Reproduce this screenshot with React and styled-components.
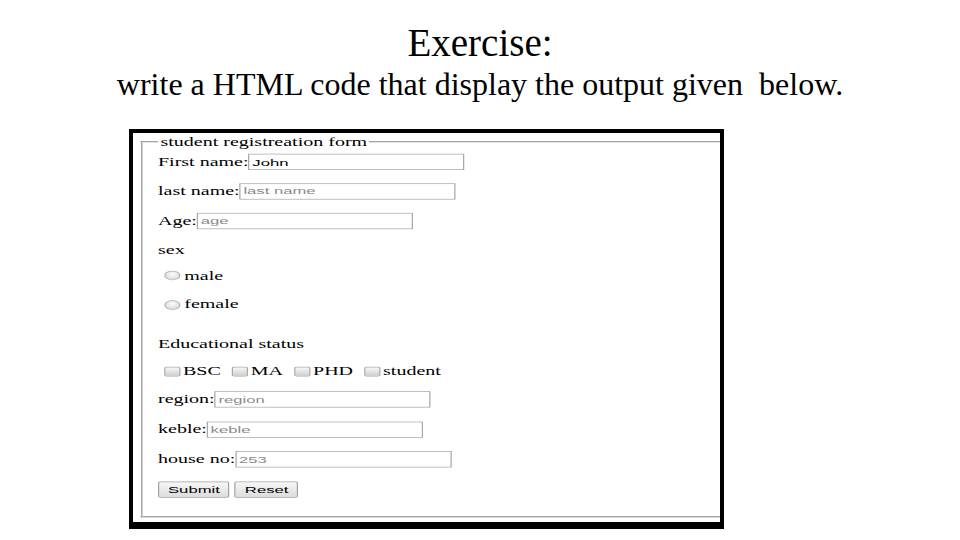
import React from 'react';
import styled, {createGlobalStyle} from 'styled-components';

const GlobalStyle = createGlobalStyle`
  html, body {
    margin: 0;
    padding: 0;
    background: #fff;
  }

  body {
    width: 960px;
    height: 540px;
    overflow: hidden;
    font-family: "Liberation Serif", "Times New Roman", serif;
    color: #000;
  }
`;

const Slide = styled.div`
  width: 960px;
  height: 540px;
  padding-top: 21px;
  box-sizing: border-box;
`;

const Title = styled.h1`
  margin: 0;
  font-weight: normal;
  font-size: 39px;
  line-height: 44px;
  text-align: center;
`;

const Subtitle = styled.p`
  margin: 1px 0 0;
  font-size: 32px;
  line-height: 36px;
  text-align: center;
  white-space: pre;
`;

// the black-bordered screenshot of the form
const Frame = styled.div`
  margin: 27px 0 0 129px;
  width: 595px;
  height: 400px;
  box-sizing: border-box;
  border: solid #000;
  border-width: 4px 4px 7px 4px;
  overflow: hidden;
  background: #fff;
`;

// the screenshot is stretched wide and squashed flat
const Screen = styled.div`
  width: 470px;
  height: 530px;
  padding: 3px 0 0 6px;
  box-sizing: border-box;
  transform: scale(1.25, 0.74);
  transform-origin: 0 0;
`;

const Fieldset = styled.fieldset`
  margin: 0;
  width: 520px;
  padding: 7px 12px 25px;
  border: 2px groove #d0d0d0;
  display: flex;
  flex-direction: column;
  font-size: 16px;
`;

const Legend = styled.legend`
  padding: 0 2px;
  font-size: 16px;
  line-height: 18px;
`;

const Row = styled.div`
  display: flex;
  align-items: center;
  height: 22px;
  margin-top: ${p => p.$gap || 0}px;
  white-space: pre;
`;

const Label = styled.span`
  line-height: 18px;
`;

const TextField = styled.input`
  width: 173px;
  height: 22px;
  box-sizing: border-box;
  margin: 0;
  padding: 1px 2px;
  border: 1px solid #a9a9a9;
  font: 13.33px "Liberation Sans", Arial, sans-serif;
  color: #000;
  background: #fff;
  outline: none;

  &::placeholder {
    color: #8a8a8a;
  }
`;

const Radio = styled.input.attrs({type: 'radio'})`
  appearance: none;
  width: 13px;
  height: 13px;
  margin: 0 3px 0 5px;
  box-sizing: border-box;
  border-radius: 50%;
  border: 1px solid #b0b0b0;
  background: radial-gradient(circle at 50% 35%, #fbfbfb, #d2d2d2);
`;

const CheckItem = styled.label`
  display: inline-flex;
  align-items: center;
  margin-right: 4px;
`;

const Checkbox = styled.input.attrs({type: 'checkbox'})`
  appearance: none;
  width: 13px;
  height: 13px;
  margin: 0 2px 0 5px;
  box-sizing: border-box;
  border-radius: 2px;
  border: 1px solid #a8a8a8;
  background: linear-gradient(#f6f6f6, #d0d0d0);
`;

const Button = styled.button`
  height: 22px;
  margin: 0 4px 0 0;
  padding: 1px 7px;
  font: 13.33px "Liberation Sans", Arial, sans-serif;
  color: #000;
  border: 1px solid #a3a3a3;
  border-radius: 2px;
  background: linear-gradient(#f7f7f7, #dcdcdc);
`;

const fields = [
  {label: 'First name:', value: 'John', gap: 0},
  {label: 'last name:', placeholder: 'last name', gap: 17.9},
  {label: 'Age:', placeholder: 'age', gap: 17.8},
];

const lowerFields = [
  {label: 'region:', placeholder: 'region', gap: 15.8},
  {label: 'keble:', placeholder: 'keble', gap: 19},
  {label: 'house no:', placeholder: '253', gap: 18.1},
];

const levels = ['BSC', 'MA', 'PHD', 'student'];

function App() {
  return (
      <Slide>
        <GlobalStyle/>
        <Title>Exercise:</Title>
        <Subtitle>write a HTML code that display the output given  below.</Subtitle>
        <Frame>
          <Screen>
            <Fieldset>
              <Legend>student registreation form</Legend>
              {fields.map(f => (
                  <Row key={f.label} $gap={f.gap}>
                    <Label>{f.label}</Label>
                    <TextField defaultValue={f.value} placeholder={f.placeholder}/>
                  </Row>
              ))}
              <Row $gap={17.2}><Label>sex</Label></Row>
              <Row $gap={12.7}>
                <Radio name="sex"/><Label>male</Label>
              </Row>
              <Row $gap={17.6}>
                <Radio name="sex"/><Label>female</Label>
              </Row>
              <Row $gap={31.1}><Label>Educational status</Label></Row>
              <Row $gap={15.1}>
                {levels.map(l => (
                    <CheckItem key={l}>
                      <Checkbox/>
                      <Label>{l}</Label>
                    </CheckItem>
                ))}
              </Row>
              {lowerFields.map(f => (
                  <Row key={f.label} $gap={f.gap}>
                    <Label>{f.label}</Label>
                    <TextField placeholder={f.placeholder}/>
                  </Row>
              ))}
              <Row $gap={18.3}>
                <Button type="submit">Submit</Button>
                <Button type="reset">Reset</Button>
              </Row>
            </Fieldset>
          </Screen>
        </Frame>
      </Slide>
  );
}

export default App;
